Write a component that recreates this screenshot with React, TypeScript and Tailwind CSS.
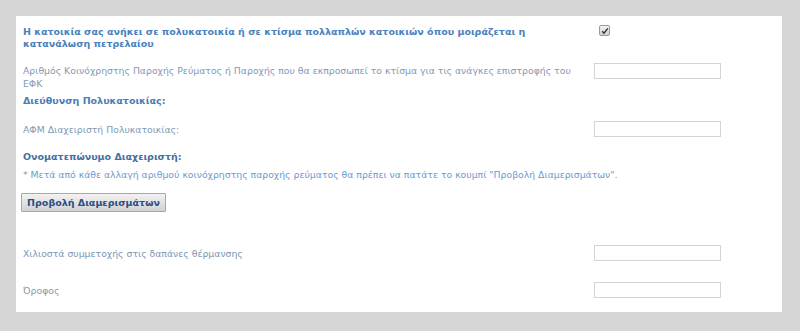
import React from "react";

const font = { fontFamily: '"DejaVu Sans", Verdana, sans-serif' };

function Input() {
  return <div className="w-[127px] h-[16px] border border-[#d4d4d4] bg-white shrink-0" />;
}

export default function App() {
  return (
    <div className="w-[800px] h-[331px] bg-[#d6d6d6] pt-[16px] pl-[16px] overflow-hidden" style={font}>
      <div className="w-[766px] h-[296px] bg-white pl-[7px] flex flex-col">
        <div className="flex items-start mt-[10px]">
          <div className="w-[571px] text-[9.5px] leading-[12px] font-bold text-[#4a82bd] pr-[30px]">
            Η κατοικία σας ανήκει σε πολυκατοικία ή σε κτίσμα πολλαπλών κατοικιών όπου μοιράζεται η κατανάλωση πετρελαίου
          </div>
          <div className="ml-[5px] -mt-[1px] w-[11px] h-[11px] rounded-[2px] border border-[#9a9a9a] bg-gradient-to-b from-[#f4f4f4] to-[#cfcfcf] flex items-center justify-center">
            <svg width="8" height="8" viewBox="0 0 8 8">
              <path d="M1.2 4.3 L3 6.2 L6.8 1.4" fill="none" stroke="#333" strokeWidth="1.5" />
            </svg>
          </div>
        </div>
        <div className="flex items-start mt-[13px]">
          <div className="w-[571px] pt-[1px] text-[9.3px] leading-[13px] text-[#8299b4] pr-[10px]">
            Αριθμός Κοινόχρηστης Παροχής Ρεύματος ή Παροχής που θα εκπροσωπεί το κτίσμα για τις ανάγκες επιστροφής του ΕΦΚ
          </div>
          <Input />
        </div>
        <div className="mt-[5px] text-[9.5px] leading-[12px] font-bold text-[#4a7db5]">Διεύθυνση Πολυκατοικίας:</div>
        <div className="flex items-center mt-[14px] h-[16px]">
          <div className="w-[571px] text-[9.3px] leading-[13px] text-[#8299b4]">ΑΦΜ Διαχειριστή Πολυκατοικίας:</div>
          <Input />
        </div>
        <div className="mt-[14px] text-[9.5px] leading-[12px] font-bold text-[#44709f]">Ονοματεπώνυμο Διαχειριστή:</div>
        <div className="mt-[6px] text-[9.3px] leading-[12px] text-[#6a9bd0]">
          * Μετά από κάθε αλλαγή αριθμού κοινόχρηστης παροχής ρεύματος θα πρέπει να πατάτε το κουμπί "Προβολή Διαμερισμάτων".
        </div>
        <div className="flex mt-[12px] -ml-[2px]">
          <button
            className="h-[19px] w-[145px] whitespace-nowrap border border-[#a8a8a8] bg-gradient-to-b from-[#f2f2f2] to-[#d2d2d2] text-[9.5px] font-bold text-[#2d4f86] leading-[17px] px-0 rounded-[1px]"
            style={font}
          >
            Προβολή Διαμερισμάτων
          </button>
        </div>
        <div className="flex items-center mt-[33px] h-[16px]">
          <div className="w-[571px] text-[9.3px] leading-[13px] text-[#7d95b3]">Χιλιοστά συμμετοχής στις δαπάνες θέρμανσης</div>
          <Input />
        </div>
        <div className="flex items-center mt-[21px] h-[16px]">
          <div className="w-[571px] text-[9.3px] leading-[13px] text-[#8299b4]">Όροφος</div>
          <Input />
        </div>
      </div>
    </div>
  );
}
